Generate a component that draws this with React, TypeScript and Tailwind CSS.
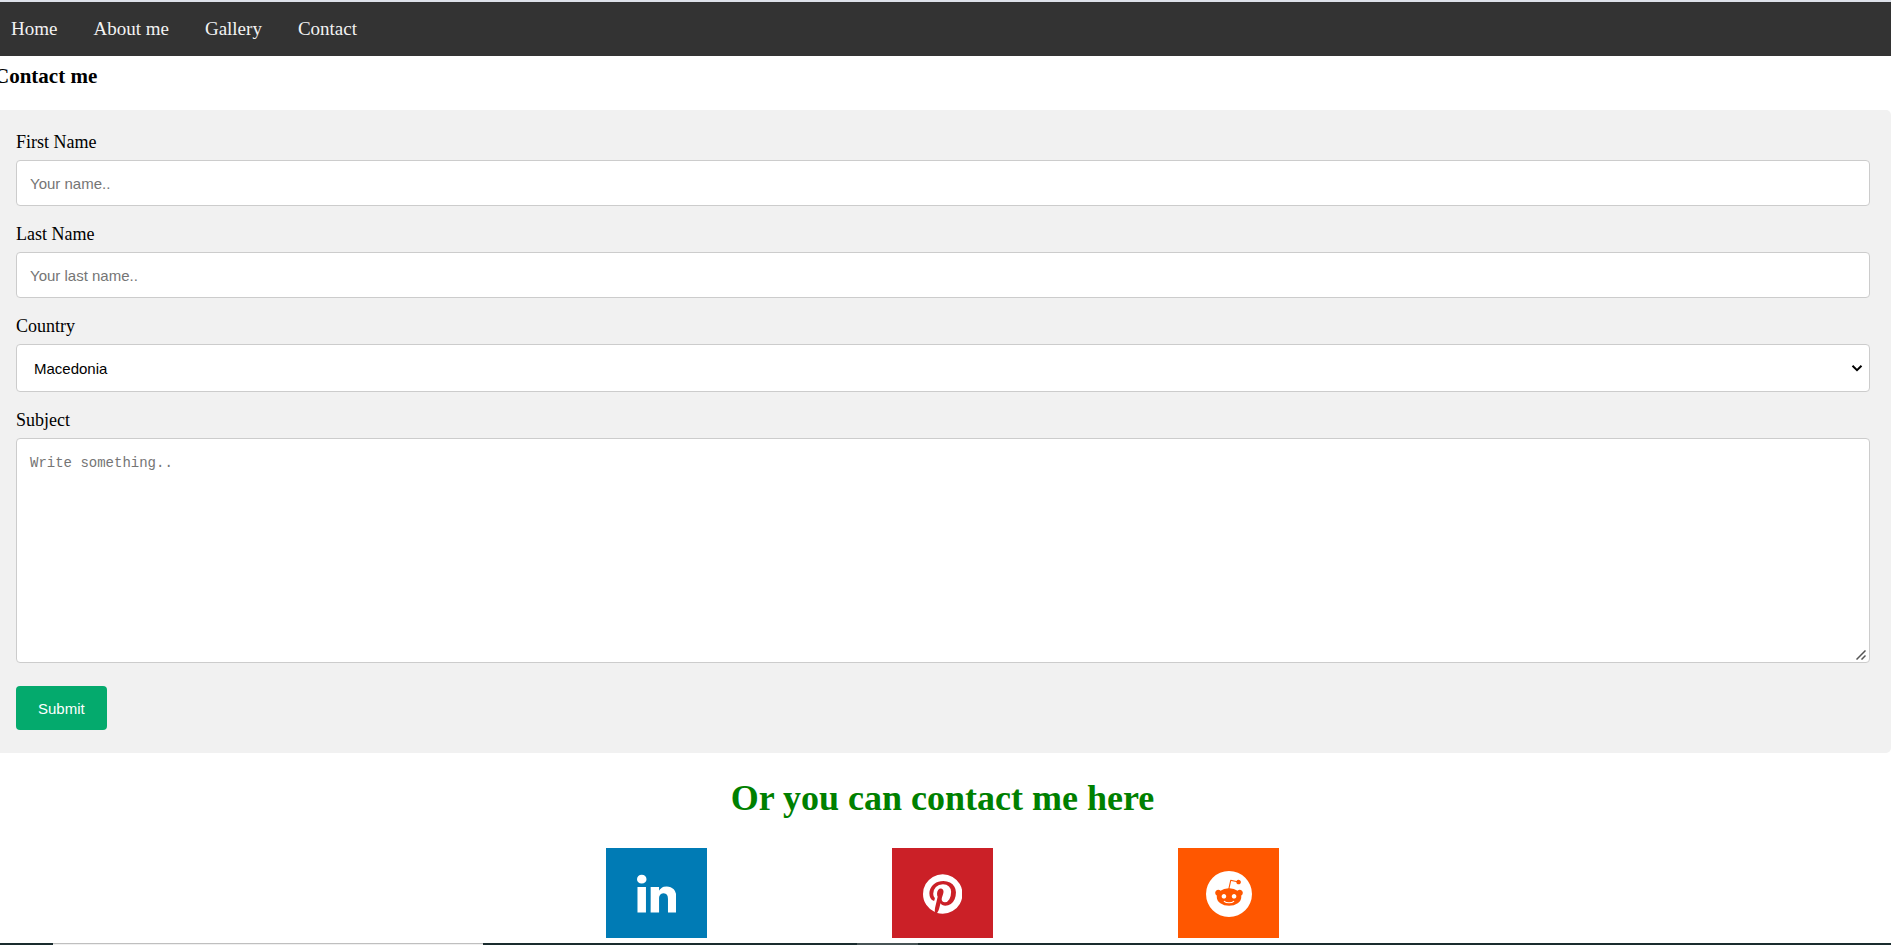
import React from "react";

const links = ["Home", "About me", "Gallery", "Contact"];

const fieldClass =
  "block w-full rounded border border-[#cccccc] bg-white font-['Liberation_Sans',sans-serif] text-[15px] placeholder:text-[#757575]";
const labelClass = "mb-2 block w-fit text-[18px] leading-5";

const socials = [
  {
    name: "LinkedIn",
    tile: "bg-[#007bb5]",
    width: 1536,
    path: "M349 625v991h-330v-991h330zM370 319q1 73-50.5 122t-135.5 49h-2q-82 0-132-49t-50-122q0-74 51.5-122.5t134.5-48.5 133 48.5 51 122.5zM1536 1048v568h-329v-530q0-105-40.5-164.5t-126.5-59.5q-63 0-105.5 34.5t-63.5 85.5q-11 30-11 81v553h-329q2-399 2-647t-1-296l-1-48h329v144h-2q20-32 41-56t56.5-52 87-43.5 114.5-15.5q171 0 275 113.5t104 332.5z",
  },
  {
    name: "Pinterest",
    tile: "bg-[#cb2027]",
    width: 1536,
    path: "M1536 896q0 209-103 385.5t-279.5 279.5-385.5 103q-111 0-218-32 59-93 78-164 9-34 54-211 20 39 73 67.5t114 28.5q121 0 216-68.5t147-188.5 52-270q0-114-59.5-214t-172.5-163-255-63q-105 0-196 29t-154.5 77-109 110.5-67 129.5-21.5 134q0 104 40 183t117 111q30 12 38-20 2-7 8-31t8-30q6-23-11-43-51-61-51-151 0-151 104.5-259.5t273.5-108.5q151 0 235.5 82t84.5 213q0 170-68.5 289t-175.5 119q-61 0-98-43.5t-23-104.5q8-35 26.5-93.5t30-103 11.5-75.5q0-50-27-83t-77-33q-62 0-105 57t-43 142q0 73 25 122l-99 418q-17 70-13 177-206-91-333-281t-127-423q0-209 103-385.5t279.5-279.5 385.5-103 385.5 103 279.5 279.5 103 385.5z",
  },
  {
    name: "Reddit",
    tile: "bg-[#ff5700]",
    width: 1792,
    path: "M1095 1167q16 16 0 31-62 62-199 62t-199-62q-16-15 0-31 6-6 15-6t15 6q48 49 169 49 120 0 169-49 6-6 15-6t15 6zM788 986q0 37-26 63t-63 26-63.5-26-26.5-63q0-38 26.5-64t63.5-26 63 26.5 26 63.5zM1183 986q0 37-26.5 63t-63.5 26-63-26-26-63 26-63.5 63-26.5 63.5 26 26.5 64zM1434 849q0-49-35-84t-85-35q-49 0-86 36-130-90-311-96l63-283 200 45q0 37 26 63t63 26 63.5-26.5 26.5-63.5-26.5-63.5-63.5-26.5q-54 0-80 50l-221-49q-19-5-25 16l-69 312q-180 7-309 97-35-37-87-37-50 0-85 35t-35 84q0 35 18.5 64t49.5 44q-6 27-6 56 0 142 140 243t337 101q198 0 338-101t140-243q0-32-7-57 30-15 48-43.5t18-63.5zM1792 896q0 182-71 348t-191 286-286 191-348 71-348-71-286-191-191-286-71-348 71-348 191-286 286-191 348-71 348 71 286 191 191 286 71 348z",
  },
];

export default function App() {
  return (
    <div className="flex min-h-screen flex-col overflow-hidden bg-white font-['Liberation_Serif',serif] text-black">
      <nav className="flex gap-9 border-t-2 border-[#dee1ea] bg-[#333333] px-[11px] py-[15px] text-[19px] leading-6 text-[#f2f2f2]">
        {links.map((name) => (
          <a key={name} href="#">
            {name}
          </a>
        ))}
      </nav>

      <main className="grow">
        <h3 className="-ml-1.5 pt-2 pb-[22px] text-[21px] leading-6 font-bold">Contact me</h3>

        <form
          className="flex flex-col rounded-r-[5px] bg-[#f1f1f1] pt-[22px] pr-[21px] pb-[23px] pl-4"
          onSubmit={(e) => e.preventDefault()}
        >
          <div className="mb-[18px]">
            <label htmlFor="fname" className={labelClass}>
              First Name
            </label>
            <input id="fname" type="text" placeholder="Your name.." className={`${fieldClass} h-[46px] px-[13px]`} />
          </div>
          <div className="mb-[18px]">
            <label htmlFor="lname" className={labelClass}>
              Last Name
            </label>
            <input id="lname" type="text" placeholder="Your last name.." className={`${fieldClass} h-[46px] px-[13px]`} />
          </div>
          <div className="mb-[18px]">
            <label htmlFor="country" className={labelClass}>
              Country
            </label>
            <div className="relative">
              <select id="country" className={`${fieldClass} h-12 appearance-none px-[17px] pt-0.5`}>
                <option>Macedonia</option>
              </select>
              <svg
                className="pointer-events-none absolute top-5 right-[7px] h-2 w-3"
                viewBox="0 0 12 8"
                fill="none"
                stroke="currentColor"
                strokeWidth="2"
                aria-hidden="true"
              >
                <path d="M1.5 1.8 6 6.2 10.500 1.8" />
              </svg>
            </div>
          </div>
          <div className="mb-[23px]">
            <label htmlFor="subject" className={labelClass}>
              Subject
            </label>
            <div className="relative">
              <textarea
                id="subject"
                placeholder="Write something.."
                className="block h-[225px] w-full resize-none rounded border border-[#cccccc] bg-white p-[13px] pt-[15px] font-['Liberation_Mono',monospace] text-[14px] leading-[18px] placeholder:text-[#757575]"
              />
              <svg
                className="pointer-events-none absolute right-1 bottom-[3px] size-2.5"
                viewBox="0 0 10 10"
                fill="none"
                stroke="#555555"
                strokeWidth="1.5"
                aria-hidden="true"
              >
                <path d="M0.5 9.5 9.500 0.5M5.500 9.500 9.500 5.500" />
              </svg>
            </div>
          </div>
          <button
            type="submit"
            className="h-11 self-start rounded bg-[#04aa6d] px-[22px] pt-0.5 font-['Liberation_Sans',sans-serif] text-[15px] text-white"
          >
            Submit
          </button>
        </form>

        <section className="pr-1.5 pb-[5px]">
          <h1 className="pt-6 pb-[29px] text-center text-[36px] leading-[42px] font-bold text-[#008000]">
            Or you can contact me here
          </h1>
          <div className="flex justify-center gap-[185px]">
            {socials.map((s) => (
              <a
                key={s.name}
                href="#"
                aria-label={s.name}
                className={`flex h-[90px] w-[101px] items-center justify-center pt-0.5 text-white ${s.tile}`}
              >
                <svg className="h-[46px]" viewBox={`0 0 ${s.width} 1792`} fill="currentColor" aria-hidden="true">
                  <path d={s.path} />
                </svg>
              </a>
            ))}
          </div>
        </section>
      </main>

      <footer className="flex h-0.5 bg-[#1a2c2e]">
        <div className="ml-[53px] w-[430px] border-t border-[#bfbfbf] bg-[#f0f0f0]" />
        <div className="ml-[374px] w-[61px] bg-[#475456]" />
      </footer>
    </div>
  );
}
